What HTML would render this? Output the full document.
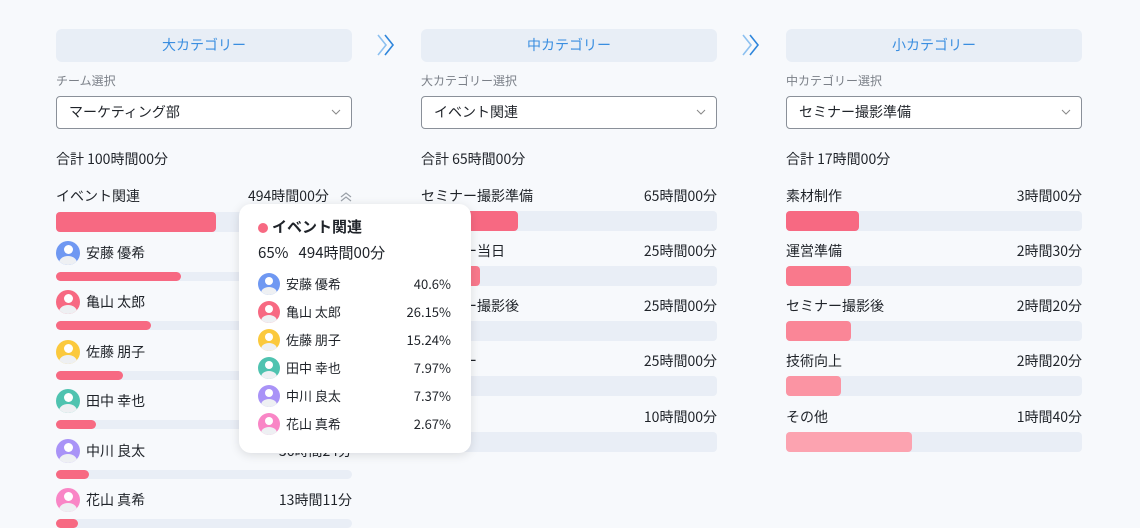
<!DOCTYPE html>
<html><head><meta charset="utf-8"><style>
*{margin:0;padding:0;box-sizing:border-box}
body{width:1140px;height:520px;overflow:hidden;background:#f7f9fc;font-family:"Noto Sans CJK JP","Liberation Sans",sans-serif;color:#1f2329;position:relative}
.a{position:absolute}
.hd{position:absolute;top:29px;width:296px;height:33px;background:#e8eef6;border-radius:6px;color:#3a8ee0;font-size:14px;text-align:center;line-height:33px}
.lb{position:absolute;top:72px;font-size:12px;line-height:18px;color:#7b8088}
.sel{position:absolute;top:96px;width:296px;height:33px;background:#fff;border:1px solid #8a9099;border-radius:4px;font-size:14px;line-height:31px;padding-left:12px}
.sel svg{position:absolute;right:10px;top:12px}
.tot{position:absolute;top:149px;font-size:14px;line-height:20px}
.t{position:absolute;font-size:14px;line-height:20px;white-space:nowrap}
.r{text-align:right}
.tr{position:absolute;height:20px;width:296px;background:#e9eef6;border-radius:4px}
.tr i{display:block;height:100%;border-radius:4px}
.ts{position:absolute;height:9px;width:296px;background:#e9eef6;border-radius:5px}
.ts i{display:block;height:100%;border-radius:5px;background:#f76982}
.av{position:absolute;width:24px;height:24px;border-radius:50%;overflow:hidden}
.av:before{content:"";position:absolute;left:7.5px;top:4px;width:9px;height:9px;border-radius:50%;background:#fff}
.av:after{content:"";position:absolute;left:3px;top:15px;width:18px;height:14px;border-radius:50%;background:#eef0f3}
.tip{position:absolute;left:239px;top:204px;width:232px;height:249px;background:#fff;border-radius:12px;box-shadow:0 2px 10px rgba(0,0,0,.12)}
.tip .av{width:22px;height:22px}
.tip .av:before{left:7px;top:4px;width:8px;height:8px}
.tip .av:after{left:3px;top:14px;width:16px;height:12px}
</style></head><body>
<div class="hd" style="left:56px">大カテゴリー</div>
<div class="hd" style="left:421px">中カテゴリー</div>
<div class="hd" style="left:786px">小カテゴリー</div>
<svg class="a" style="left:376px;top:33px" width="22" height="24" viewBox="0 0 22 24"><path d="M2 2 L10 12 L2 22" fill="none" stroke="#8cc0f0" stroke-width="1.6"/><path d="M9 2 L17 12 L9 22" fill="none" stroke="#2f86dc" stroke-width="1.6"/></svg>
<svg class="a" style="left:741px;top:33px" width="22" height="24" viewBox="0 0 22 24"><path d="M2 2 L10 12 L2 22" fill="none" stroke="#8cc0f0" stroke-width="1.6"/><path d="M9 2 L17 12 L9 22" fill="none" stroke="#2f86dc" stroke-width="1.6"/></svg>
<div class="lb" style="left:56px">チーム選択</div>
<div class="lb" style="left:421px">大カテゴリー選択</div>
<div class="lb" style="left:786px">中カテゴリー選択</div>
<div class="sel" style="left:56px">マーケティング部<svg width="10" height="6"><path d="M1 1 L5 5 L9 1" fill="none" stroke="#888" stroke-width="1"/></svg></div>
<div class="sel" style="left:421px">イベント関連<svg width="10" height="6"><path d="M1 1 L5 5 L9 1" fill="none" stroke="#888" stroke-width="1"/></svg></div>
<div class="sel" style="left:786px">セミナー撮影準備<svg width="10" height="6"><path d="M1 1 L5 5 L9 1" fill="none" stroke="#888" stroke-width="1"/></svg></div>
<div class="tot" style="left:56px">合計 100時間00分</div>
<div class="tot" style="left:421px">合計 65時間00分</div>
<div class="tot" style="left:786px">合計 17時間00分</div>

<div class="t" style="left:56px;top:186px">イベント関連</div>
<div class="t" style="left:248px;top:186px">494時間00分</div>
<svg class="a" style="left:339px;top:191px" width="14" height="12"><path d="M2 6 L7 2 L12 6 M2 10 L7 6 L12 10" fill="none" stroke="#9aa0a8" stroke-width="1.2"/></svg>
<div class="tr" style="left:56px;top:212px"><i style="width:160px;background:#f76982"></i></div>

<div class="av" style="left:56px;top:241px;background:#6f98f2"></div><div class="t" style="left:86px;top:243px">安藤 優希</div><div class="t r" style="left:252px;top:243px;width:100px">200時間36分</div><div class="ts" style="left:56px;top:272px"><i style="width:125px"></i></div>
<div class="av" style="left:56px;top:290px;background:#f76982"></div><div class="t" style="left:86px;top:292px">亀山 太郎</div><div class="t r" style="left:252px;top:292px;width:100px">129時間11分</div><div class="ts" style="left:56px;top:321px"><i style="width:95px"></i></div>
<div class="av" style="left:56px;top:340px;background:#fbc93d"></div><div class="t" style="left:86px;top:342px">佐藤 朋子</div><div class="t r" style="left:252px;top:342px;width:100px">75時間17分</div><div class="ts" style="left:56px;top:371px"><i style="width:67px"></i></div>
<div class="av" style="left:56px;top:389px;background:#4fc3b0"></div><div class="t" style="left:86px;top:391px">田中 幸也</div><div class="t r" style="left:252px;top:391px;width:100px">39時間22分</div><div class="ts" style="left:56px;top:420px"><i style="width:40px"></i></div>
<div class="av" style="left:56px;top:439px;background:#a993f7"></div><div class="t" style="left:86px;top:441px">中川 良太</div><div class="t r" style="left:252px;top:441px;width:100px">36時間24分</div><div class="ts" style="left:56px;top:470px"><i style="width:33px"></i></div>
<div class="av" style="left:56px;top:488px;background:#f986c6"></div><div class="t" style="left:86px;top:490px">花山 真希</div><div class="t r" style="left:252px;top:490px;width:100px">13時間11分</div><div class="ts" style="left:56px;top:519px"><i style="width:22px"></i></div>

<div class="t" style="left:421px;top:186px">セミナー撮影準備</div><div class="t r" style="left:597px;top:186px;width:120px">65時間00分</div><div class="tr" style="left:421px;top:211px"><i style="width:97px;background:#f76982"></i></div>
<div class="t" style="left:421px;top:241px">セミナー当日</div><div class="t r" style="left:597px;top:241px;width:120px">25時間00分</div><div class="tr" style="left:421px;top:266px"><i style="width:59px;background:#f9798c"></i></div>
<div class="t" style="left:421px;top:296px">セミナー撮影後</div><div class="t r" style="left:597px;top:296px;width:120px">25時間00分</div><div class="tr" style="left:421px;top:321px"><i style="width:45px;background:#fa8697"></i></div>
<div class="t" style="left:421px;top:351px">セミナー</div><div class="t r" style="left:597px;top:351px;width:120px">25時間00分</div><div class="tr" style="left:421px;top:376px"><i style="width:45px;background:#fb94a3"></i></div>
<div class="t" style="left:421px;top:407px">その他</div><div class="t r" style="left:597px;top:407px;width:120px">10時間00分</div><div class="tr" style="left:421px;top:432px"><i style="width:24px;background:#fca3b0"></i></div>

<div class="t" style="left:786px;top:186px">素材制作</div><div class="t r" style="left:962px;top:186px;width:120px">3時間00分</div><div class="tr" style="left:786px;top:211px"><i style="width:73px;background:#f76982"></i></div>
<div class="t" style="left:786px;top:241px">運営準備</div><div class="t r" style="left:962px;top:241px;width:120px">2時間30分</div><div class="tr" style="left:786px;top:266px"><i style="width:65px;background:#f9798c"></i></div>
<div class="t" style="left:786px;top:296px">セミナー撮影後</div><div class="t r" style="left:962px;top:296px;width:120px">2時間20分</div><div class="tr" style="left:786px;top:321px"><i style="width:65px;background:#fa8697"></i></div>
<div class="t" style="left:786px;top:351px">技術向上</div><div class="t r" style="left:962px;top:351px;width:120px">2時間20分</div><div class="tr" style="left:786px;top:376px"><i style="width:55px;background:#fb94a3"></i></div>
<div class="t" style="left:786px;top:407px">その他</div><div class="t r" style="left:962px;top:407px;width:120px">1時間40分</div><div class="tr" style="left:786px;top:432px"><i style="width:126px;background:#fca3b0"></i></div>

<div class="tip">
<div class="a" style="left:19px;top:19px;width:10px;height:10px;border-radius:50%;background:#f76982"></div>
<div class="t" style="left:33px;top:13px;font-weight:bold;font-size:15px">イベント関連</div>
<div class="t" style="left:19px;top:39px;font-size:15px">65%&nbsp;&nbsp;&nbsp;494時間00分</div>
<div class="av" style="left:19px;top:69px;background:#6f98f2"></div><div class="t" style="left:47px;top:70px;font-size:13px">安藤 優希</div><div class="t r" style="left:112px;top:70px;width:100px;font-size:13px">40.6%</div>
<div class="av" style="left:19px;top:97px;background:#f76982"></div><div class="t" style="left:47px;top:98px;font-size:13px">亀山 太郎</div><div class="t r" style="left:112px;top:98px;width:100px;font-size:13px">26.15%</div>
<div class="av" style="left:19px;top:125px;background:#fbc93d"></div><div class="t" style="left:47px;top:126px;font-size:13px">佐藤 朋子</div><div class="t r" style="left:112px;top:126px;width:100px;font-size:13px">15.24%</div>
<div class="av" style="left:19px;top:153px;background:#4fc3b0"></div><div class="t" style="left:47px;top:154px;font-size:13px">田中 幸也</div><div class="t r" style="left:112px;top:154px;width:100px;font-size:13px">7.97%</div>
<div class="av" style="left:19px;top:181px;background:#a993f7"></div><div class="t" style="left:47px;top:182px;font-size:13px">中川 良太</div><div class="t r" style="left:112px;top:182px;width:100px;font-size:13px">7.37%</div>
<div class="av" style="left:19px;top:209px;background:#f986c6"></div><div class="t" style="left:47px;top:210px;font-size:13px">花山 真希</div><div class="t r" style="left:112px;top:210px;width:100px;font-size:13px">2.67%</div>
</div>
</body></html>
